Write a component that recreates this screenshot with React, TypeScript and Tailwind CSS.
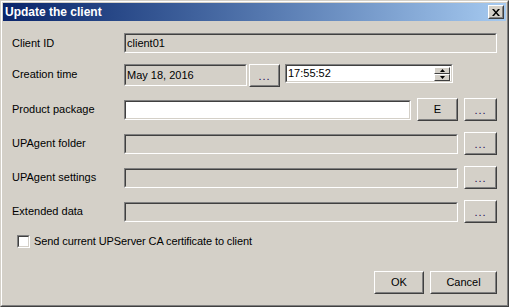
import React from 'react';

const font = { fontFamily: '"Liberation Sans", Arial, sans-serif' };

// classic sunken edit box
function Field({
  className = '',
  white = false,
  children,
}: {
  className?: string;
  white?: boolean;
  children?: React.ReactNode;
}) {
  return (
    <div
      className={`border border-t-[#808080] border-l-[#808080] border-b-white border-r-white ${className}`}
    >
      <div
        className={`h-full flex items-center border border-t-[#404040] border-l-[#404040] border-b-[#d4d0c8] border-r-[#d4d0c8] ${
          white ? 'bg-white' : 'bg-[#d4d0c8]'
        }`}
      >
        {children}
      </div>
    </div>
  );
}

// classic raised push button
function Btn({ className = '', children }: { className?: string; children: React.ReactNode }) {
  return (
    <button
      className={`h-[23px] border border-t-white border-l-white border-b-[#404040] border-r-[#404040] bg-[#d4d0c8] p-0 ${className}`}
    >
      <div className="h-full flex items-center justify-center border border-t-[#d4d0c8] border-l-[#d4d0c8] border-b-[#808080] border-r-[#808080] text-[11px] text-black">
        {children}
      </div>
    </button>
  );
}

function Label({ children }: { children: React.ReactNode }) {
  return <div className="w-[112px] shrink-0 text-[11px] text-black">{children}</div>;
}

function Dots() {
  return <span className="tracking-[1px] mt-[2px] text-[#1a0a50]">...</span>;
}

export default function App() {
  return (
    <div style={font} className="w-[509px] h-[307px] bg-[#d4d0c8]">
      <div className="h-full border border-t-[#d4d0c8] border-l-[#d4d0c8] border-b-[#404040] border-r-[#404040]">
        <div className="h-full flex flex-col border border-t-white border-l-white border-b-[#808080] border-r-[#808080] p-px">
          {/* title bar */}
          <div className="h-[18px] shrink-0 flex items-center justify-between bg-linear-to-r from-[#0a246a] to-[#a6caf0] pl-[2px] pr-[2px]">
            <span className="text-white font-bold text-[12px] leading-none">Update the client</span>
            <button className="w-[16px] h-[14px] border border-t-white border-l-white border-b-[#404040] border-r-[#404040] bg-[#d4d0c8] p-0">
              <div className="h-full flex items-center justify-center border border-t-[#d4d0c8] border-l-[#d4d0c8] border-b-[#808080] border-r-[#808080]">
                <svg width="8" height="7" viewBox="0 0 8 7">
                  <path d="M0 0h2l2 2.5L6 0h2L5 3.5 8 7H6L4 4.5 2 7H0l3-3.5z" fill="#000" />
                </svg>
              </div>
            </button>
          </div>

          {/* body */}
          <div className="flex-1 flex flex-col px-[9px]">
            <div className="mt-[12px] h-[20px] flex items-center">
              <Label>Client ID</Label>
              <Field className="flex-1 h-[20px]">
                <span className="pl-px text-[11px] text-black">client01</span>
              </Field>
            </div>

            <div className="mt-[11px] h-[23px] flex items-start">
              <div className="w-[112px] shrink-0 h-[21px] flex items-center text-[11px] text-black">
                Creation time
              </div>
              <Field className="w-[123px] h-[22px]">
                <span className="pl-px text-[11px] text-black">May 18, 2016</span>
              </Field>
              <Btn className="ml-[2px] w-[31px]">
                <Dots />
              </Btn>
              <Field white className="ml-[5px] w-[168px] h-[19px]">
                <div className="flex-1 flex items-center justify-between pr-px">
                  <span className="pl-px text-[11px] text-black">17:55:52</span>
                  <div className="flex flex-col w-[16px]">
                    <div className="h-[7px] flex items-center justify-center border border-t-white border-l-white border-b-[#404040] border-r-[#404040] bg-[#d4d0c8]">
                      <svg width="5" height="3" viewBox="0 0 5 3">
                        <path d="M2.5 0L5 3H0z" fill="#000" />
                      </svg>
                    </div>
                    <div className="h-[7px] flex items-center justify-center border border-t-white border-l-white border-b-[#404040] border-r-[#404040] bg-[#d4d0c8]">
                      <svg width="5" height="3" viewBox="0 0 5 3">
                        <path d="M0 0h5L2.5 3z" fill="#000" />
                      </svg>
                    </div>
                  </div>
                </div>
              </Field>
            </div>

            <div className="mt-[11px] h-[23px] flex items-center">
              <Label>Product package</Label>
              <Field white className="w-[287px] h-[20px]" />
              <Btn className="ml-[6px] w-[41px]">E</Btn>
              <Btn className="ml-[6px] w-[33px]">
                <Dots />
              </Btn>
            </div>

            {['UPAgent folder', 'UPAgent settings', 'Extended data'].map((l) => (
              <div key={l} className="mt-[11px] h-[23px] flex items-center">
                <Label>{l}</Label>
                <Field className="flex-1 h-[20px]" />
                <Btn className="ml-[6px] w-[33px]">
                  <Dots />
                </Btn>
              </div>
            ))}

            <div className="mt-[12px] h-[13px] flex items-center pl-[5px]">
              <div className="w-[13px] h-[13px] border border-t-[#808080] border-l-[#808080] border-b-white border-r-white">
                <div className="h-full bg-white border border-t-[#404040] border-l-[#404040] border-b-[#d4d0c8] border-r-[#d4d0c8]" />
              </div>
              <span className="ml-[4px] text-[11px] text-black tracking-[-0.1px]">
                Send current UPServer CA certificate to client
              </span>
            </div>

            <div className="mt-[23px] flex justify-end gap-[6px]">
              <Btn className="w-[50px]">OK</Btn>
              <Btn className="w-[67px]">Cancel</Btn>
            </div>
          </div>
        </div>
      </div>
    </div>
  );
}
